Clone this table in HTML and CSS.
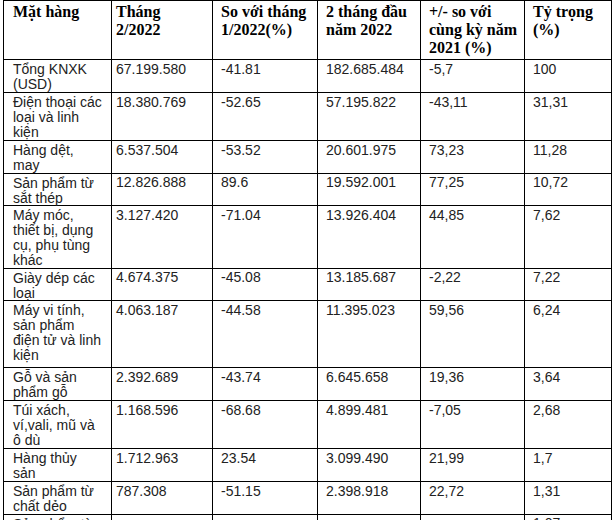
FILE: index.html
```html
<!DOCTYPE html>
<html lang="vi">
<head>
<meta charset="utf-8">
<title>Xuất khẩu tháng 2/2022</title>
<link rel="stylesheet" href="styles.css">
</head>
<body>
<table class="data">
  <colgroup>
    <col class="c1"><col class="c2"><col class="c3"><col class="c4"><col class="c5"><col class="c6">
  </colgroup>
  <thead>
    <tr>
      <th>Mặt hàng</th>
      <th>Tháng 2/2022</th>
      <th>So với tháng 1/2022(%)</th>
      <th>2 tháng đầu năm 2022</th>
      <th>+/- so với cùng kỳ năm 2021 (%)</th>
      <th>Tỷ trọng (%)</th>
    </tr>
  </thead>
  <tbody>
    <tr><td>Tổng KNXK (USD)</td><td>67.199.580</td><td>-41.81</td><td>182.685.484</td><td>-5,7</td><td>100</td></tr>
    <tr><td>Điện thoại các loại và linh kiện</td><td>18.380.769</td><td>-52.65</td><td>57.195.822</td><td>-43,11</td><td>31,31</td></tr>
    <tr><td>Hàng dệt, may</td><td>6.537.504</td><td>-53.52</td><td>20.601.975</td><td>73,23</td><td>11,28</td></tr>
    <tr class="short"><td>Sản phẩm từ sắt thép</td><td>12.826.888</td><td>89.6</td><td>19.592.001</td><td>77,25</td><td>10,72</td></tr>
    <tr><td>Máy móc, thiết bị, dụng cụ, phụ tùng khác</td><td>3.127.420</td><td>-71.04</td><td>13.926.404</td><td>44,85</td><td>7,62</td></tr>
    <tr class="short"><td>Giày dép các loại</td><td>4.674.375</td><td>-45.08</td><td>13.185.687</td><td>-2,22</td><td>7,22</td></tr>
    <tr class="tall"><td>Máy vi tính, sản phẩm<br>điện tử và linh kiện</td><td>4.063.187</td><td>-44.58</td><td>11.395.023</td><td>59,56</td><td>6,24</td></tr>
    <tr><td>Gỗ và sản phẩm gỗ</td><td>2.392.689</td><td>-43.74</td><td>6.645.658</td><td>19,36</td><td>3,64</td></tr>
    <tr><td>Túi xách, ví,vali, mũ và ô dù</td><td>1.168.596</td><td>-68.68</td><td>4.899.481</td><td>-7,05</td><td>2,68</td></tr>
    <tr><td>Hàng thủy sản</td><td>1.712.963</td><td>23.54</td><td>3.099.490</td><td>21,99</td><td>1,7</td></tr>
    <tr><td>Sản phẩm từ chất dẻo</td><td>787.308</td><td>-51.15</td><td>2.398.918</td><td>22,72</td><td>1,31</td></tr>
    <tr class="cut"><td>Sản phẩm từ cao su</td><td></td><td></td><td></td><td></td><td>1,07</td></tr>
  </tbody>
</table>
</body>
</html>
```

FILE: styles.css
```css
html, body {
  margin: 0;
  padding: 0;
  background: #ffffff;
}

.data {
  border-collapse: collapse;
  margin-left: 3px;
  table-layout: fixed;
  width: 608px;
}

.c1 { width: 108px; }
.c2 { width: 101px; }
.c3 { width: 105px; }
.c4 { width: 103px; }
.c5 { width: 104px; }
.c6 { width: 87px; }

.data th,
.data td {
  border: 1px solid #000000;
  vertical-align: top;
  text-align: left;
}

.data th {
  font-family: "Liberation Serif", "Times New Roman", serif;
  font-weight: bold;
  font-size: 16px;
  line-height: 18px;
  color: #000000;
  padding: 2px 3px 2px 8px;
  height: 57px;
  box-sizing: border-box;
}

.data td {
  font-family: "Liberation Sans", Arial, sans-serif;
  font-size: 14px;
  line-height: 15px;
  color: #222222;
  padding: 2px 3px 0 8px;
}

.data th:first-child {
  padding-left: 9px;
}

.data td:first-child {
  padding: 2px 9px 0 9px;
}

.data th:nth-child(2) {
  padding-left: 4px;
  padding-right: 10px;
}

.data td:nth-child(2) {
  padding-left: 4px;
}

.short td {
  padding-top: 1px;
  line-height: 14.5px;
}

.tall td {
  height: 67px;
  box-sizing: border-box;
}

.cut td {
  padding-top: 4px;
}

.cut td:last-child {
  padding-top: 1px;
}
```
